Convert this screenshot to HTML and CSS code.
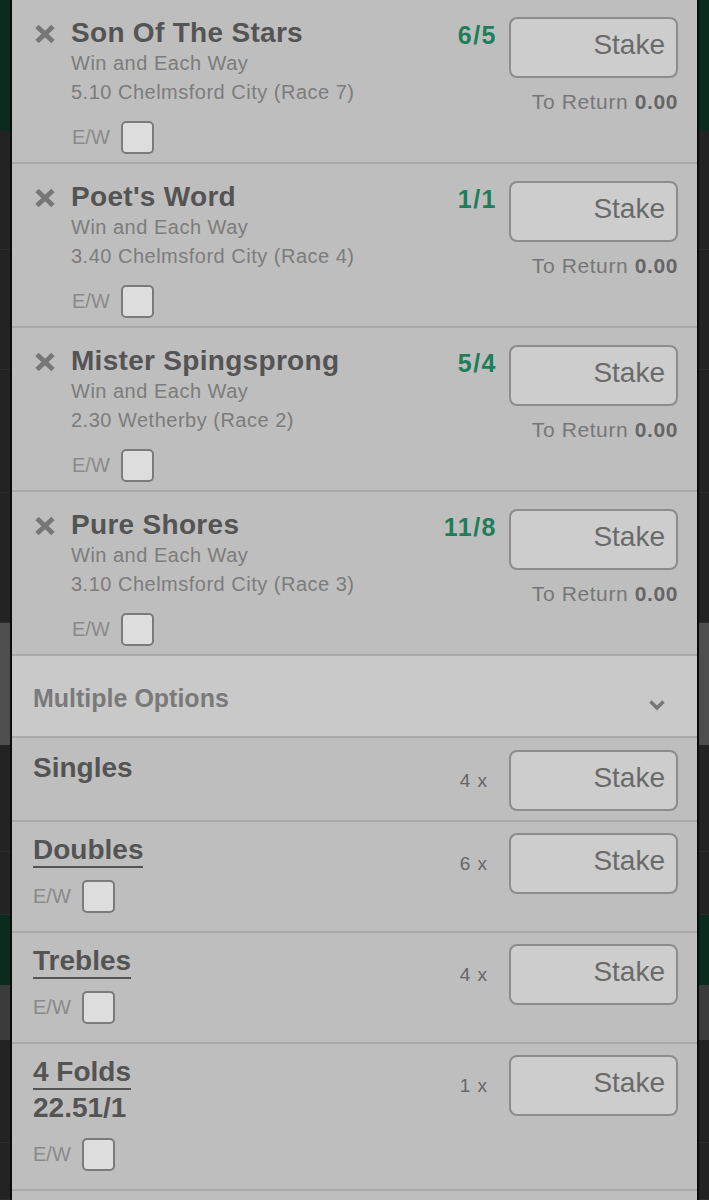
FILE: index.html
```html
<!DOCTYPE html>
<html lang="en">
<head>
    <meta charset="UTF-8">
    <meta name="viewport" content="width=device-width, initial-scale=1.0">
    <title>Bet Slip</title>
    <link rel="stylesheet" href="styles.css">
</head>
<body>
    <div class="screen">
        <!-- page behind the slip, left edge -->
        <div class="backdrop backdrop-left">
            <div class="bd-green"></div>
            <div class="bd-dark"></div>
            <div class="bd-dark"></div>
            <div class="bd-dark"></div>
            <div class="bd-dark"></div>
            <div class="bd-grey"></div>
            <div class="bd-dark"></div>
            <div class="bd-dark"></div>
            <div class="bd-green"></div>
            <div class="bd-grey2"></div>
            <div class="bd-dark"></div>
            <div class="bd-dark"></div>
        </div>

        <main class="slip">
            <!-- Selections -->
            <section class="selection">
                <svg class="remove" width="22" height="18" viewBox="0 0 22 18"><path d="M3 1.5 L19 16.5 M19 1.5 L3 16.5" /></svg>
                <div class="sel-info">
                    <div class="sel-name">Son Of The Stars</div>
                    <div class="sel-line">Win and Each Way</div>
                    <div class="sel-line">5.10 Chelmsford City (Race 7)</div>
                    <label class="ew"><span>E/W</span><input type="checkbox"></label>
                </div>
                <div class="odds">6/5</div>
                <div class="stake-col">
                    <input class="stake" type="text" placeholder="Stake">
                    <div class="to-return">To Return <b>0.00</b></div>
                </div>
            </section>

            <section class="selection">
                <svg class="remove" width="22" height="18" viewBox="0 0 22 18"><path d="M3 1.5 L19 16.5 M19 1.5 L3 16.5" /></svg>
                <div class="sel-info">
                    <div class="sel-name">Poet's Word</div>
                    <div class="sel-line">Win and Each Way</div>
                    <div class="sel-line">3.40 Chelmsford City (Race 4)</div>
                    <label class="ew"><span>E/W</span><input type="checkbox"></label>
                </div>
                <div class="odds">1/1</div>
                <div class="stake-col">
                    <input class="stake" type="text" placeholder="Stake">
                    <div class="to-return">To Return <b>0.00</b></div>
                </div>
            </section>

            <section class="selection">
                <svg class="remove" width="22" height="18" viewBox="0 0 22 18"><path d="M3 1.5 L19 16.5 M19 1.5 L3 16.5" /></svg>
                <div class="sel-info">
                    <div class="sel-name">Mister Spingsprong</div>
                    <div class="sel-line">Win and Each Way</div>
                    <div class="sel-line">2.30 Wetherby (Race 2)</div>
                    <label class="ew"><span>E/W</span><input type="checkbox"></label>
                </div>
                <div class="odds">5/4</div>
                <div class="stake-col">
                    <input class="stake" type="text" placeholder="Stake">
                    <div class="to-return">To Return <b>0.00</b></div>
                </div>
            </section>

            <section class="selection">
                <svg class="remove" width="22" height="18" viewBox="0 0 22 18"><path d="M3 1.5 L19 16.5 M19 1.5 L3 16.5" /></svg>
                <div class="sel-info">
                    <div class="sel-name">Pure Shores</div>
                    <div class="sel-line">Win and Each Way</div>
                    <div class="sel-line">3.10 Chelmsford City (Race 3)</div>
                    <label class="ew"><span>E/W</span><input type="checkbox"></label>
                </div>
                <div class="odds">11/8</div>
                <div class="stake-col">
                    <input class="stake" type="text" placeholder="Stake">
                    <div class="to-return">To Return <b>0.00</b></div>
                </div>
            </section>

            <!-- Multiples -->
            <div class="multi-head">
                <span>Multiple Options</span>
                <svg class="chevron" width="18" height="12" viewBox="0 0 18 12"><path d="M2.5 2.5 L9 9 L15.5 2.5" /></svg>
            </div>

            <section class="multi multi-singles">
                <div class="bet-info">
                    <div class="bet-name">Singles</div>
                </div>
                <div class="count">4 x</div>
                <input class="stake" type="text" placeholder="Stake">
            </section>

            <section class="multi">
                <div class="bet-info">
                    <span class="bet-name bet-link">Doubles</span>
                    <label class="ew"><span>E/W</span><input type="checkbox"></label>
                </div>
                <div class="count">6 x</div>
                <input class="stake" type="text" placeholder="Stake">
            </section>

            <section class="multi">
                <div class="bet-info">
                    <span class="bet-name bet-link">Trebles</span>
                    <label class="ew"><span>E/W</span><input type="checkbox"></label>
                </div>
                <div class="count">4 x</div>
                <input class="stake" type="text" placeholder="Stake">
            </section>

            <section class="multi">
                <div class="bet-info">
                    <span class="bet-name bet-link">4 Folds</span>
                    <div class="bet-price">22.51/1</div>
                    <label class="ew"><span>E/W</span><input type="checkbox"></label>
                </div>
                <div class="count">1 x</div>
                <input class="stake" type="text" placeholder="Stake">
            </section>
        </main>

        <!-- page behind the slip, right edge -->
        <div class="backdrop backdrop-right">
            <div class="bd-green"></div>
            <div class="bd-dark"></div>
            <div class="bd-dark"></div>
            <div class="bd-dark"></div>
            <div class="bd-dark"></div>
            <div class="bd-grey"></div>
            <div class="bd-dark"></div>
            <div class="bd-dark"></div>
            <div class="bd-green"></div>
            <div class="bd-grey2"></div>
            <div class="bd-dark"></div>
            <div class="bd-dark"></div>
        </div>
    </div>
</body>
</html>
```

FILE: styles.css
```css
body {
    margin: 0;
    font-family: "Liberation Sans", Arial, sans-serif;
    background-color: #232323;
}
.screen {
    display: flex;
    height: 1200px;
    overflow: hidden;
}

/* dimmed page showing at the sides */
.backdrop {
    width: 10px;
    display: grid;
    grid-template-rows: 131px 119px 120px 123px 130px 122px 107px 63px 70px 55px 103px 1fr;
}
.backdrop-left {
    border-right: 2px solid #0b0b0b;
}
.backdrop-right {
    border-left: 2px solid #0b0b0b;
}
.bd-green {
    background-color: #0c2b1f;
}
.bd-dark {
    background-color: #232323;
    border-bottom: 1px solid #2c2c2c;
}
.bd-grey {
    background-color: #4e4e4e;
}
.bd-grey2 {
    background-color: #3b3b3b;
}

.slip {
    flex: 1;
    background-color: #bebebe;
    color: #545454;
}

/* single selections */
.selection {
    display: grid;
    grid-template-columns: 37px 1fr auto 169px;
    align-items: start;
    padding: 16px 19px 8px 22px;
    border-bottom: 2px solid #a9a9a9;
}
.remove {
    margin-top: 9px;
}
.remove path {
    stroke: #777;
    stroke-width: 4.8;
    fill: none;
}
.sel-name {
    font-size: 28px;
    font-weight: bold;
    line-height: 33px;
    letter-spacing: 0.3px;
}
.sel-line {
    font-size: 20px;
    line-height: 28.5px;
    letter-spacing: 0.5px;
    color: #7c7c7c;
}
.ew {
    display: flex;
    align-items: center;
    gap: 11px;
    margin-top: 15px;
    padding-left: 1px;
    font-size: 20px;
    color: #8a8a8a;
}
.ew input {
    appearance: none;
    -webkit-appearance: none;
    width: 33px;
    height: 33px;
    margin: 0;
    border: 2px solid #7b7b7b;
    border-radius: 5px;
    background-color: #dddddd;
}
.odds {
    margin: 3px 12px 0 0;
    font-size: 25px;
    font-weight: bold;
    line-height: 33px;
    letter-spacing: 1.5px;
    color: #1e7e5c;
}
.stake {
    display: block;
    box-sizing: border-box;
    width: 169px;
    height: 61px;
    margin: 1px 0 0;
    padding: 0 11px 6px 0;
    border: 2px solid #8c8c8c;
    border-radius: 8px;
    background-color: #cdcdcd;
    font-family: inherit;
    font-size: 28px;
    text-align: right;
    color: #545454;
}
.stake::placeholder {
    color: #6a6a6a;
}
.to-return {
    margin-top: 11px;
    font-size: 21px;
    line-height: 26px;
    letter-spacing: 0.6px;
    text-align: right;
    color: #777;
}
.to-return b {
    color: #666;
}

/* multiples */
.multi-head {
    display: flex;
    justify-content: space-between;
    align-items: center;
    box-sizing: border-box;
    height: 82px;
    padding: 5px 31px 0 21px;
    background-color: #c9c9c9;
    border-bottom: 2px solid #a9a9a9;
    font-size: 25px;
    font-weight: bold;
    color: #7a7a7a;
}
.chevron {
    margin-top: 12px;
}
.chevron path {
    stroke: #777;
    stroke-width: 3.5;
    fill: none;
}
.multi {
    display: grid;
    grid-template-columns: 1fr auto 169px;
    align-items: start;
    padding: 11px 19px 18px 21px;
    border-bottom: 2px solid #a9a9a9;
}
.multi-singles {
    padding: 12px 19px 9px 21px;
}
.multi .stake {
    margin-top: 0;
}
.bet-name {
    font-size: 28px;
    font-weight: bold;
    line-height: 35px;
}
.bet-link {
    display: inline-block;
    line-height: 33px;
    border-bottom: 2px solid #545454;
}
.bet-price {
    font-size: 28px;
    font-weight: bold;
    line-height: 36px;
}
.multi .ew {
    margin-top: 12px;
    padding-left: 0;
}
.count {
    margin-right: 21px;
    font-size: 19px;
    line-height: 61px;
    letter-spacing: 1px;
    color: #666;
}
```
